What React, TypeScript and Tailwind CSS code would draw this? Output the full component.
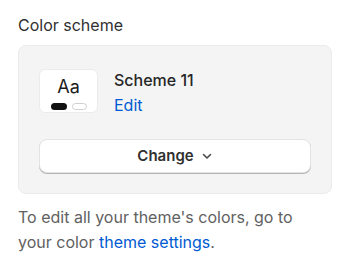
import React from "react";

export default function App() {
  return (
    <div className="w-[349px] h-[261px] bg-white pl-[18px] pr-[17px] pt-[14px]" style={{ fontFamily: "Inter, 'Liberation Sans', sans-serif" }}>
      <div className="text-[16px] leading-[22px] text-[#303030]">Color scheme</div>
      <div className="mt-[9px] rounded-[8px] border border-[#ebebeb] bg-[#f4f4f4] px-[20px] pt-[23px] pb-[20px]">
        <div className="flex gap-[16px]">
          <div className="w-[59px] h-[44px] rounded-[6px] border border-[#ebebeb] bg-white flex flex-col items-center pt-[6px]">
            <div className="text-[18px] leading-[21px] text-[#1a1a1a]">Aa</div>
            <div className="flex gap-[5px] mt-[6px]">
              <div className="w-[16px] h-[7px] rounded-full bg-[#111]" />
              <div className="w-[15px] h-[7px] rounded-full bg-white border border-[#cfcfcf]" />
            </div>
          </div>
          <div className="flex flex-col">
            <div className="text-[16px] leading-[22px] text-[#262626] font-[450]">Scheme 11</div>
            <div className="text-[16px] leading-[22px] text-[#005bd3] mt-[3px]">Edit</div>
          </div>
        </div>
        <button className="mt-[23px] w-full h-[34px] rounded-[8px] bg-white border border-[#e3e3e3] shadow-[0_1px_0_0_#b5b5b5] flex items-center justify-center gap-[7px] text-[15px] font-semibold text-[#303030]">
          Change
          <svg width="12" height="12" viewBox="0 0 12 12" fill="none">
            <path d="M2.5 4.5 L6 8 L9.5 4.5" stroke="#4a4a4a" strokeWidth="1.6" strokeLinecap="round" strokeLinejoin="round" />
          </svg>
        </button>
      </div>
      <p className="mt-[11px] max-w-[300px] text-[16px] leading-[25px] text-[#616161]">
        To edit all your theme's colors, go to your color <span className="text-[#005bd3]">theme settings</span>.
      </p>
    </div>
  );
}
